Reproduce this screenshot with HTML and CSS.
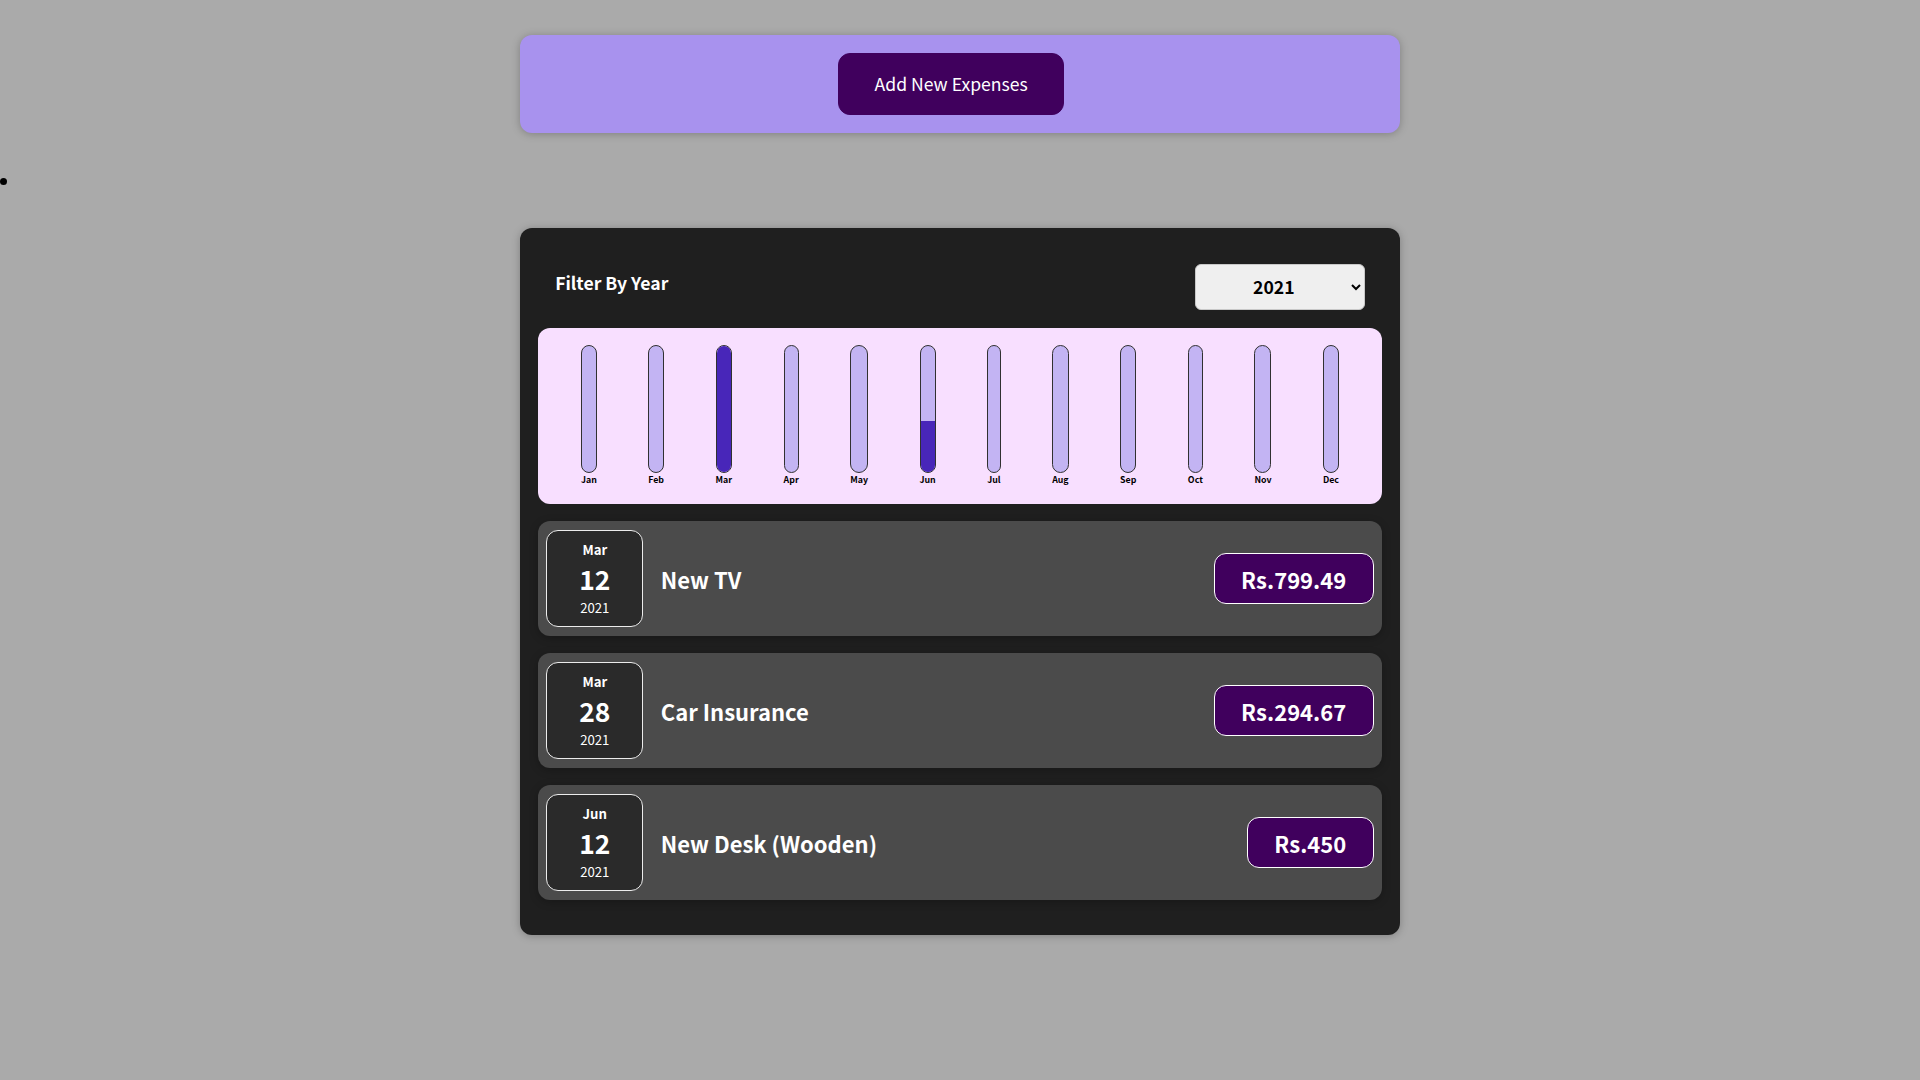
FILE: index.html
```html
<!DOCTYPE html>
<html lang="en">
<head>
<meta charset="utf-8">
<title>Expenses</title>
<link rel="stylesheet" href="styles.css">
</head>
<body>
<div class="new-expense">
  <button class="new-expense__btn">Add New Expenses</button>
</div>
<ul class="stray-list"><li></li></ul>
<div class="expenses">
  <div class="expenses-filter">
    <div class="expenses-filter__control">
      <label>Filter By Year</label>
      <select>
        <option>2022</option>
        <option selected>2021</option>
        <option>2020</option>
        <option>2019</option>
      </select>
    </div>
  </div>
  <div class="chart">
    <div class="chart-bar"><div class="chart-bar__inner"><div class="chart-bar__fill" style="height:0%"></div></div><div class="chart-bar__label">Jan</div></div>
    <div class="chart-bar"><div class="chart-bar__inner"><div class="chart-bar__fill" style="height:0%"></div></div><div class="chart-bar__label">Feb</div></div>
    <div class="chart-bar"><div class="chart-bar__inner"><div class="chart-bar__fill" style="height:100%"></div></div><div class="chart-bar__label">Mar</div></div>
    <div class="chart-bar"><div class="chart-bar__inner"><div class="chart-bar__fill" style="height:0%"></div></div><div class="chart-bar__label">Apr</div></div>
    <div class="chart-bar"><div class="chart-bar__inner"><div class="chart-bar__fill" style="height:0%"></div></div><div class="chart-bar__label">May</div></div>
    <div class="chart-bar"><div class="chart-bar__inner"><div class="chart-bar__fill" style="height:41%"></div></div><div class="chart-bar__label">Jun</div></div>
    <div class="chart-bar"><div class="chart-bar__inner"><div class="chart-bar__fill" style="height:0%"></div></div><div class="chart-bar__label">Jul</div></div>
    <div class="chart-bar"><div class="chart-bar__inner"><div class="chart-bar__fill" style="height:0%"></div></div><div class="chart-bar__label">Aug</div></div>
    <div class="chart-bar"><div class="chart-bar__inner"><div class="chart-bar__fill" style="height:0%"></div></div><div class="chart-bar__label">Sep</div></div>
    <div class="chart-bar"><div class="chart-bar__inner"><div class="chart-bar__fill" style="height:0%"></div></div><div class="chart-bar__label">Oct</div></div>
    <div class="chart-bar"><div class="chart-bar__inner"><div class="chart-bar__fill" style="height:0%"></div></div><div class="chart-bar__label">Nov</div></div>
    <div class="chart-bar"><div class="chart-bar__inner"><div class="chart-bar__fill" style="height:0%"></div></div><div class="chart-bar__label">Dec</div></div>
  </div>
  <ul class="expenses-list">
    <li class="expense-item">
      <div class="expense-date">
        <div class="expense-date__month">Mar</div>
        <div class="expense-date__day">12</div>
        <div class="expense-date__year">2021</div>
      </div>
      <div class="expense-item__description">
        <h2>New TV</h2>
        <div class="expense-item__price">Rs.799.49</div>
      </div>
    </li>
    <li class="expense-item">
      <div class="expense-date">
        <div class="expense-date__month">Mar</div>
        <div class="expense-date__day">28</div>
        <div class="expense-date__year">2021</div>
      </div>
      <div class="expense-item__description">
        <h2>Car Insurance</h2>
        <div class="expense-item__price">Rs.294.67</div>
      </div>
    </li>
    <li class="expense-item">
      <div class="expense-date">
        <div class="expense-date__month">Jun</div>
        <div class="expense-date__day">12</div>
        <div class="expense-date__year">2021</div>
      </div>
      <div class="expense-item__description">
        <h2>New Desk (Wooden)</h2>
        <div class="expense-item__price">Rs.450</div>
      </div>
    </li>
  </ul>
</div>
</body>
</html>
```
FILE: styles.css
```css
* {
  box-sizing: border-box;
}

html {
  font-family: "Noto Sans CJK JP", "Noto Sans", sans-serif;
  font-size: 17.6px;
}

body {
  margin: 0;
  background-color: #aaaaaa;
}

.new-expense {
  background-color: #a892ee;
  padding: 1rem;
  margin: 2rem auto;
  width: 50rem;
  max-width: 95%;
  border-radius: 12px;
  text-align: center;
  box-shadow: 0 1px 8px rgba(0, 0, 0, 0.25);
}

.new-expense__btn {
  font: inherit;
  cursor: pointer;
  padding: 1rem 2rem;
  border: 1px solid #40005d;
  background-color: #40005d;
  color: white;
  border-radius: 12px;
  margin-right: 1rem;
}

.stray-list {
  margin: 1rem 0;
  padding: 0;
}

.stray-list li {
  list-style: disc inside;
  min-height: 1.448em;
}

.expenses {
  padding: 1rem;
  background-color: rgb(31, 31, 31);
  margin: 2rem auto;
  width: 50rem;
  max-width: 95%;
  border-radius: 12px;
  box-shadow: 0 1px 8px rgba(0, 0, 0, 0.25);
}

.expenses-filter {
  color: white;
  padding: 0 1rem;
}

.expenses-filter__control {
  display: flex;
  width: 100%;
  align-items: center;
  justify-content: space-between;
  margin: 1rem 0;
}

.expenses-filter label {
  font-weight: bold;
  margin-bottom: 0.5rem;
}

.expenses-filter select {
  font: inherit;
  padding: 0.5rem 3rem;
  font-weight: bold;
  border-radius: 6px;
  background-color: #efefef;
  border: 1px solid #c8c8c8;
  color: #000;
}

.chart {
  padding: 1rem;
  border-radius: 12px;
  background-color: #f8dfff;
  text-align: center;
  display: flex;
  justify-content: space-around;
  height: 10rem;
}

.chart-bar {
  height: 100%;
  display: flex;
  flex-direction: column;
  align-items: center;
}

.chart-bar__inner {
  height: 100%;
  width: 100%;
  border: 1px solid #313131;
  border-radius: 12px;
  background-color: #c3b4f3;
  overflow: hidden;
  display: flex;
  flex-direction: column;
  justify-content: flex-end;
}

.chart-bar__fill {
  background-color: #4826b9;
  width: 100%;
}

.chart-bar__label {
  font-weight: bold;
  font-size: 0.5rem;
  text-align: center;
}

.expenses-list {
  list-style: none;
  padding: 0;
  margin: 0;
}

.expense-item {
  display: flex;
  justify-content: space-between;
  align-items: center;
  box-shadow: 0 2px 8px rgba(0, 0, 0, 0.25);
  padding: 0.5rem;
  margin: 1rem 0;
  border-radius: 12px;
  background-color: #4b4b4b;
}

.expense-item__description {
  display: flex;
  flex-direction: row;
  align-items: center;
  justify-content: flex-start;
  flex: 1;
}

.expense-item h2 {
  font-size: 1.25rem;
  flex: 1;
  margin: 0 1rem;
  color: white;
}

.expense-item__price {
  font-size: 1.25rem;
  font-weight: bold;
  color: white;
  background-color: #40005d;
  border: 1px solid white;
  padding: 0.5rem 1.5rem;
  border-radius: 12px;
}

.expense-date {
  display: flex;
  flex-direction: column;
  width: 5.5rem;
  height: 5.5rem;
  border: 1px solid #ececec;
  background-color: #2a2a2a;
  color: white;
  border-radius: 12px;
  align-items: center;
  justify-content: center;
}

.expense-date__month {
  font-size: 0.75rem;
  font-weight: bold;
}

.expense-date__year {
  font-size: 0.75rem;
}

.expense-date__day {
  font-size: 1.5rem;
  font-weight: bold;
}
```
